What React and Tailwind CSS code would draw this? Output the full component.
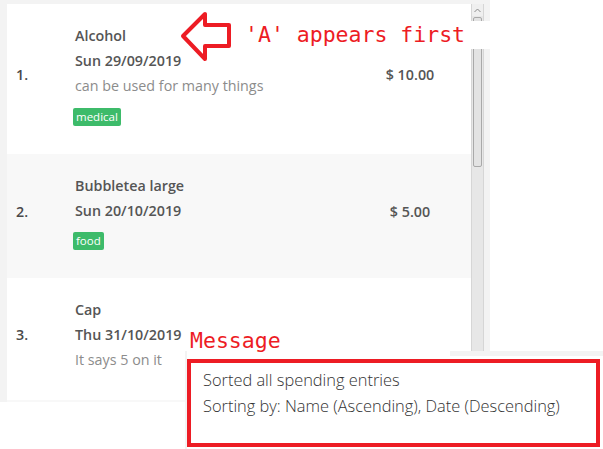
import React from 'react';

const entries = [
  { n: '1.', name: 'Alcohol', date: 'Sun 29/09/2019', desc: 'can be used for many things', tag: 'medical', price: '$ 10.00', bg: 'bg-white', tagGap: 'mt-[10px]' },
  { n: '2.', name: 'Bubbletea large', date: 'Sun 20/10/2019', tag: 'food', price: '$ 5.00', bg: 'bg-[#f8f8f8]', tagGap: 'mt-[9px]' },
  { n: '3.', name: 'Cap', date: 'Thu 31/10/2019', desc: 'It says 5 on it', price: '', bg: 'bg-white', tagGap: '' },
];

const sans = { fontFamily: '"Open Sans", "Noto Sans", sans-serif' };
const mono = { fontFamily: '"DejaVu Sans Mono", "Liberation Mono", monospace' };

function Row({ e }) {
  return (
    <div className={`flex items-center pt-[19px] pb-[28px] ${e.bg}`}>
      <div className="w-[68px] pl-[9px] text-[14.3px] font-semibold text-[#4a4a4a]">{e.n}</div>
      <div className="flex-1">
        <div className="text-[14.3px] leading-[25px] font-semibold text-[#555]">{e.name}</div>
        <div className="text-[14.3px] leading-[25px] font-semibold text-[#555]">{e.date}</div>
        {e.desc && <div className="text-[14.3px] leading-[25px] text-[#8c8c8c]">{e.desc}</div>}
        {e.tag && (
          <div className={`flex h-[18px] ${e.tagGap}`}>
            <span className="h-[18px] px-[3px] rounded-[2px] bg-[#3dbb6a] text-white text-[11.5px] leading-[18px] -ml-[2px]">
              {e.tag}
            </span>
          </div>
        )}
      </div>
      <div className="w-[90px] mr-[16px] text-center text-[14.3px] font-semibold text-[#555]">
        {e.price || <span className="inline-block w-[1px] h-[1px] bg-[#777] relative -top-[7px] -left-[16px]" />}
      </div>
    </div>
  );
}

function Scrollbar() {
  return (
    <div className="w-[13px] flex flex-col bg-[#e7e7e7] border-x border-[#d6d6d6]">
      <div className="h-[12px] flex items-center justify-center bg-[#efefef]">
        <svg width="7" height="5" viewBox="0 0 7 5">
          <path d="M0.5 4 L3.5 1 L6.5 4" fill="none" stroke="#8a8a8a" strokeWidth="1" />
        </svg>
      </div>
      <div className="mt-[1px] mx-[1px] h-[150px] rounded-[2px] border border-[#a9a9a9] bg-[#e3e3e3]" />
      <div className="flex-1" />
    </div>
  );
}

export default function App() {
  return (
    <div className="relative w-[603px] h-[449px] bg-white overflow-hidden" style={sans}>
      {/* list panel */}
      <div className="w-[490px] h-[402px] bg-[#f3f3f3] pl-[7px] pt-[4px] pr-[6px] flex">
        <div className="flex-1 bg-white overflow-hidden">
          {entries.map((e) => (
            <Row key={e.n} e={e} />
          ))}
          <div className="h-[10px] bg-[#f8f8f8]" />
        </div>
        <Scrollbar />
      </div>

      {/* annotation: arrow + note */}
      <svg className="absolute left-[180px] top-[11px]" width="52" height="52" viewBox="0 0 52 52">
        <polygon
          points="3,25 25,3 25,14 49,14 49,35 25,35 25,48"
          fill="none"
          stroke="#ed1c24"
          strokeWidth="4"
          strokeLinejoin="round"
        />
      </svg>
      <div
        className="absolute left-[236px] top-[21px] w-[254px] h-[28px] bg-white pl-[9px] text-[21.5px] leading-[28px] text-[#ed1c24] whitespace-pre"
        style={mono}
      >
        'A' appears first
      </div>

      {/* message panel */}
      <div className="absolute left-[185px] top-[351px] w-[418px] h-[98px] bg-white border-l-2 border-t-[5px] border-[#f3f3f3]" />
      <div
        className="absolute left-[187px] top-[326px] w-[263px] h-[30px] bg-white pl-[3px] text-[21.5px] leading-[30px] text-[#ed1c24]"
        style={mono}
      >
        Message
      </div>
      <div className="absolute left-[187px] top-[359px] w-[413px] h-[88px] border-4 border-[#ed1c24] bg-white pl-[12px] pt-[4px]">
        <div className="text-[16.4px] leading-[26px] font-light text-[#333]">Sorted all spending entries</div>
        <div className="text-[16.4px] leading-[26px] font-light text-[#333]">Sorting by: Name (Ascending), Date (Descending)</div>
      </div>
    </div>
  );
}
